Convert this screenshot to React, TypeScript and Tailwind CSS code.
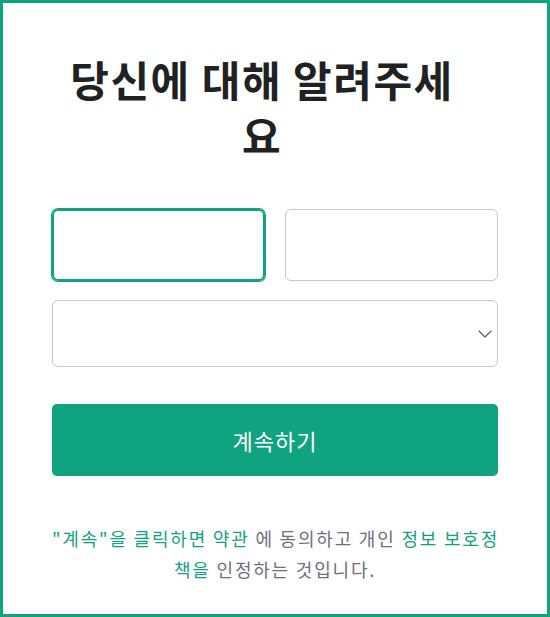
import { ChevronDown } from "lucide-react";

const font = { fontFamily: '"Noto Sans CJK KR", "Noto Sans", sans-serif' };

export default function App() {
  return (
    <div
      className="h-[617px] w-[550px] border-[3px] border-[#10a37f] bg-white"
      style={font}
    >
      <div className="mx-auto w-[446px] pt-[48px]">
        <h1 className="ml-[5px] mr-[31px] text-center text-[42px] font-bold leading-[56px] tracking-[1.5px] text-[#202123]">
          당신에 대해 알려주세요
        </h1>

        <div className="mt-[46px] grid grid-cols-2 gap-[20px]">
          <input
            className="h-[72px] rounded-[6px] border-2 border-[#10a37f] px-4 outline-none ring-1 ring-[#10a37f]"
            aria-label="이름"
          />
          <input
            className="h-[72px] rounded-[6px] border border-[#c2c8d0] px-4 outline-none"
            aria-label="성"
          />
        </div>

        <div className="mt-[19px] flex h-[67px] items-center justify-end rounded-[6px] border border-[#c2c8d0]">
          <ChevronDown size={24} strokeWidth={1.1} className="text-[#555]" />
        </div>

        <button className="mt-[37px] flex h-[72px] w-full items-center justify-center rounded-[5px] bg-[#10a37f] text-[22px] tracking-[1px] text-white">
          계속하기
        </button>

        <p className="mt-[47px] whitespace-nowrap text-center text-[18px] leading-[31px] tracking-[1.8px] text-[#6e6e80]">
          <span className="text-[#10a37f]">"계속"을 클릭하면 약관</span> 에 동의하고 개인{" "}
          <span className="text-[#10a37f]">
            정보 보호정
            <br />
            책을
          </span>{" "}
          인정하는 것입니다.
        </p>
      </div>
    </div>
  );
}
